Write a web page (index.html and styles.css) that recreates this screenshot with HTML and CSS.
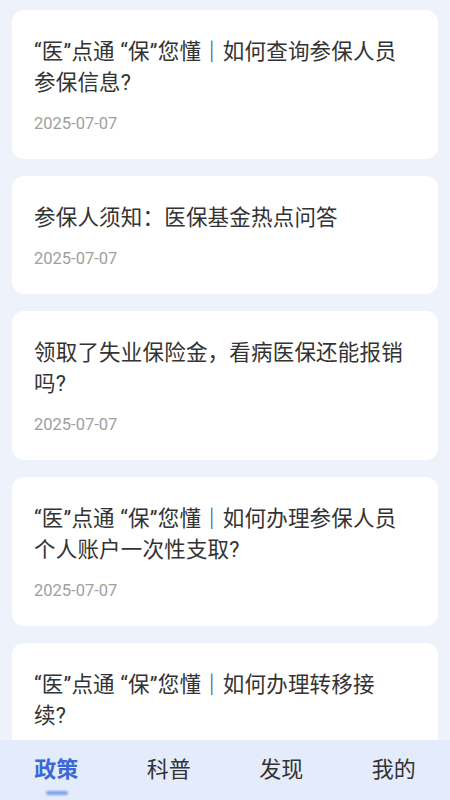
FILE: index.html
```html
<!DOCTYPE html>
<html lang="zh-CN">
<head>
<meta charset="utf-8">
<meta name="viewport" content="width=450">
<title>政策</title>
<link rel="stylesheet" href="styles.css">
</head>
<body>
<main class="scroller">
  <div class="list">
    <article class="card">
      <h2 class="card-title">“医”点通 “保”您懂｜如何查询参保人员参保信息?</h2>
      <div class="card-date">2025-07-07</div>
    </article>
    <article class="card">
      <h2 class="card-title">参保人须知：医保基金热点问答</h2>
      <div class="card-date">2025-07-07</div>
    </article>
    <article class="card">
      <h2 class="card-title">领取了失业保险金，看病医保还能报销吗?</h2>
      <div class="card-date">2025-07-07</div>
    </article>
    <article class="card">
      <h2 class="card-title">“医”点通 “保”您懂｜如何办理参保人员个人账户一次性支取?</h2>
      <div class="card-date">2025-07-07</div>
    </article>
    <article class="card">
      <h2 class="card-title">“医”点通 “保”您懂｜如何办理转移接续?</h2>
      <div class="card-date">2025-07-07</div>
    </article>
  </div>
</main>
<nav class="tabbar">
  <a class="tab tab-active">政策</a>
  <a class="tab">科普</a>
  <a class="tab">发现</a>
  <a class="tab">我的</a>
</nav>
</body>
</html>
```
FILE: styles.css
```css
html, body {
  margin: 0;
  padding: 0;
}
body {
  background: #eef2fb;
  font-family: Roboto, "Noto Sans CJK SC", sans-serif;
  width: 450px;
  height: 800px;
  overflow: hidden;
  display: flex;
  flex-direction: column;
}
.scroller {
  flex: 1;
  min-height: 0;
  overflow: hidden;
}
.list {
  display: flex;
  flex-direction: column;
  gap: 17px;
  padding: 10px 12px 20px;
}
.card {
  background: #ffffff;
  border-radius: 12px;
  padding: 26px 33px 24.5px 22px;
}
.card-title {
  margin: 0;
  font-size: 21.5px;
  font-weight: 400;
  letter-spacing: 0.2px;
  line-height: 31px;
  color: #333333;
}
.card-date {
  margin-top: 14.5px;
  font-size: 16.5px;
  line-height: 22px;
  color: #a0a0a0;
}
.tabbar {
  flex: none;
  height: 60px;
  background: #e4ebfa;
  display: grid;
  grid-template-columns: repeat(4, 1fr);
  align-items: center;
  justify-items: center;
}
.tab {
  position: relative;
  font-size: 22px;
  line-height: 30px;
  color: #333333;
  text-decoration: none;
}
.tab-active {
  color: #3b68d6;
  font-weight: 700;
}
.tab-active::after {
  content: "";
  position: absolute;
  left: 50%;
  bottom: -10px;
  width: 22px;
  height: 4px;
  margin-left: -10px;
  border-radius: 2px;
  background: #7f9fea;
  filter: blur(1.2px);
}
```
